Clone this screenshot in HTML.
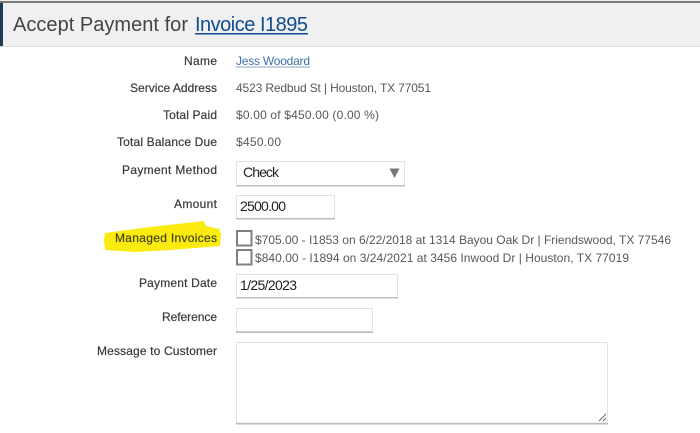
<!DOCTYPE html>
<html><head><meta charset="utf-8">
<style>
html,body{margin:0;padding:0;background:#fff;width:700px;height:433px;overflow:hidden}
svg{display:block}
text{font-family:"Liberation Sans",sans-serif;font-size:12px;fill:#555}
.l{fill:#3a3a3a;stroke:#3a3a3a;stroke-width:.2}
.v{fill:#585858}
.f{font-size:14px;fill:#222}
</style></head><body>
<svg width="700" height="433" viewBox="0 0 700 433" xmlns="http://www.w3.org/2000/svg">
<rect width="700" height="433" fill="#fff"/>
<rect x="0" y="0" width="700" height="46" fill="#f0f0f0"/>
<rect x="0" y="1" width="700" height="2" fill="#7a7a7a"/>
<rect x="0" y="46" width="700" height="1" fill="#dedede"/>
<rect x="0" y="3" width="3" height="43" fill="#1f3a55"/>
<text x="13" y="31" style="font-size:20px;fill:#444" textLength="175" lengthAdjust="spacing">Accept Payment for</text>
<text x="195" y="31" style="font-size:20px;fill:#0f4c8f" textLength="113" lengthAdjust="spacing">Invoice I1895</text>
<rect x="195" y="33" width="113" height="1.5" fill="#0f4c8f"/>

<text class="l" x="184" y="65" textLength="33">Name</text>
<text x="236" y="65" style="fill:#3f6fa8" textLength="74">Jess Woodard</text>
<rect x="236" y="66.5" width="74" height="1" fill="#8aa6c8"/>
<text class="l" x="130" y="92" textLength="87">Service Address</text>
<text class="v" x="236" y="92" textLength="195">4523 Redbud St | Houston, TX 77051</text>
<text class="l" x="163" y="119" textLength="54">Total Paid</text>
<text class="v" x="236" y="119" textLength="143">$0.00 of $450.00 (0.00 %)</text>
<text class="l" x="117" y="146" textLength="100">Total Balance Due</text>
<text class="v" x="236" y="146" textLength="45">$450.00</text>

<text class="l" x="122" y="174" textLength="95">Payment Method</text>
<rect x="236.5" y="161.5" width="168" height="24" fill="#fff" stroke="#e2e2e2"/>
<rect x="236" y="185" width="169" height="1.5" fill="#bdbdbd"/>
<text class="f" x="243" y="177" textLength="36">Check</text>
<path d="M389.5 168.5H399.5L394.5 178Z" fill="#777"/>

<text class="l" x="174" y="208" textLength="43">Amount</text>
<rect x="236.5" y="195.5" width="98" height="23" fill="#fff" stroke="#e2e2e2"/>
<rect x="236" y="218" width="99" height="1.5" fill="#bdbdbd"/>
<text class="f" x="240" y="211" textLength="46">2500.00</text>

<path d="M105 233L150 227L204 221L206 226L219 229L221 234L220 246L170 250L135 252L105 250L104 240Z" fill="#fbeb0f"/>
<text x="115" y="242" style="fill:#45451a;stroke:#45451a;stroke-width:.2" textLength="102">Managed Invoices</text>
<rect x="237" y="231" width="14.5" height="14.5" fill="#fff" stroke="#808080" stroke-width="2"/>
<rect x="237" y="250" width="14.5" height="14.5" fill="#fff" stroke="#808080" stroke-width="2"/>
<text class="v" x="255" y="244" textLength="416">$705.00 - I1853 on 6/22/2018 at 1314 Bayou Oak Dr | Friendswood, TX 77546</text>
<text class="v" x="255" y="262" textLength="374">$840.00 - I1894 on 3/24/2021 at 3456 Inwood Dr | Houston, TX 77019</text>

<text class="l" x="139" y="287" textLength="78">Payment Date</text>
<rect x="236.5" y="274.5" width="161" height="23" fill="#fff" stroke="#e2e2e2"/>
<rect x="236" y="297" width="162" height="1.5" fill="#bdbdbd"/>
<text class="f" x="240" y="290" textLength="57">1/25/2023</text>

<text class="l" x="162" y="321" textLength="55">Reference</text>
<rect x="236.5" y="308.5" width="136" height="23" fill="#fff" stroke="#e2e2e2"/>
<rect x="236" y="331.5" width="137" height="1.5" fill="#bdbdbd"/>

<text class="l" x="97" y="355" textLength="120">Message to Customer</text>
<rect x="236.5" y="342.5" width="371" height="80.5" fill="#fff" stroke="#e2e2e2"/>
<rect x="236" y="423" width="372" height="1.5" fill="#bdbdbd"/>
<path d="M599 421L606 414M603 421L606 418" stroke="#666" stroke-width="1" fill="none"/>
</svg>
</body></html>
